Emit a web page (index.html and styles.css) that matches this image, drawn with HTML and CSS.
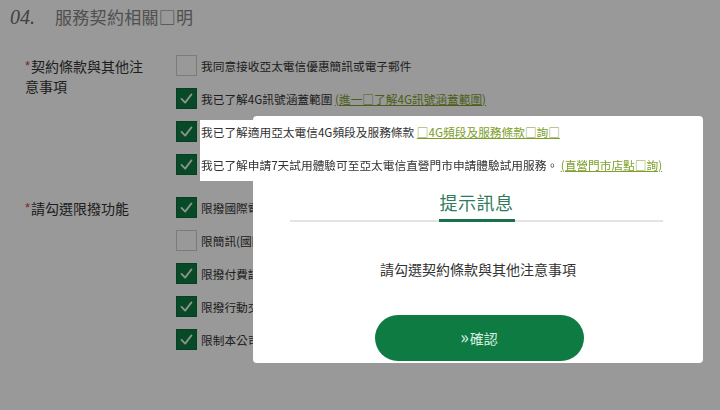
FILE: index.html
```html
<!DOCTYPE html>
<html lang="zh-Hant">
<head>
<meta charset="utf-8">
<title>服務契約相關說明</title>
<link rel="stylesheet" href="styles.css">
</head>
<body>
<div class="page">
  <h2 class="sec-title"><span class="num">04.</span><span class="title-text">服務契約相關□明</span></h2>

  <div class="form-row first">
    <div class="label"><span class="req">*</span>契約條款與其他注意事項</div>
    <ul class="opts">
      <li class="opt"><span class="cb"></span><span class="txt">我同意接收亞太電信優惠簡訊或電子郵件</span></li>
      <li class="opt"><span class="cb on"><svg viewBox="0 0 21 21"><polyline points="5,11 9,15 16,6"/></svg></span><span class="txt">我已了解4G訊號涵蓋範圍 <a class="lnk">(進一□了解4G訊號涵蓋範圍)</a></span></li>
      <li class="opt"><span class="cb on"><svg viewBox="0 0 21 21"><polyline points="5,11 9,15 16,6"/></svg></span><span class="txt lifted top">我已了解適用亞太電信4G頻段及服務條款 <a class="lnk">□4G頻段及服務條款□詢□</a></span></li>
      <li class="opt"><span class="cb on"><svg viewBox="0 0 21 21"><polyline points="5,11 9,15 16,6"/></svg></span><span class="txt lifted">我已了解申請7天試用體驗可至亞太電信直營門市申請體驗試用服務。 <a class="lnk">(直營門市店點□詢)</a></span></li>
    </ul>
  </div>

  <div class="form-row second">
    <div class="label"><span class="req">*</span>請勾選限撥功能</div>
    <ul class="opts">
      <li class="opt"><span class="cb on"><svg viewBox="0 0 21 21"><polyline points="5,11 9,15 16,6"/></svg></span><span class="txt">限撥國際電話</span></li>
      <li class="opt"><span class="cb"></span><span class="txt">限簡訊(國際簡訊)</span></li>
      <li class="opt"><span class="cb on"><svg viewBox="0 0 21 21"><polyline points="5,11 9,15 16,6"/></svg></span><span class="txt">限撥付費語音資訊</span></li>
      <li class="opt"><span class="cb on"><svg viewBox="0 0 21 21"><polyline points="5,11 9,15 16,6"/></svg></span><span class="txt">限撥行動交友</span></li>
      <li class="opt"><span class="cb on"><svg viewBox="0 0 21 21"><polyline points="5,11 9,15 16,6"/></svg></span><span class="txt">限制本公司小額付費</span></li>
    </ul>
  </div>
</div>

<div class="overlay"></div>

<div class="modal">
  <div class="tabs"><div class="tab">提示訊息</div></div>
  <p class="msg">請勾選契約條款與其他注意事項</p>
  <button class="btn"><span class="arr">»</span>確認</button>
</div>
</body>
</html>
```

FILE: styles.css
```css
html, body {
  margin: 0;
  padding: 0;
  background: #ffffff;
}

body {
  font-family: "Noto Sans CJK TC", "Noto Sans", sans-serif;
  color: #333;
  width: 720px;
  height: 410px;
  overflow: hidden;
}

.page {
  padding-top: 5px;
}

.sec-title {
  margin: 0;
  padding-left: 10px;
  height: 24px;
  line-height: 24px;
  font-weight: normal;
  display: flex;
  align-items: center;
}

.num {
  font-family: "Liberation Serif", serif;
  font-style: italic;
  font-size: 20px;
  color: #6e6e6e;
  width: 45px;
}

.title-text {
  font-size: 17px;
  color: #858585;
  letter-spacing: 0.3px;
}

.form-row {
  display: flex;
  align-items: flex-start;
}

.form-row.first {
  margin-top: 20px;
}

.form-row.second {
  margin-top: 10px;
}

.label {
  width: 126px;
  margin-left: 25px;
  margin-right: 25px;
  padding-top: 7px;
  font-size: 14px;
  line-height: 20px;
  color: #333;
}

.req {
  font-family: "Liberation Sans", sans-serif;
  color: #d23a3a;
  font-size: 13px;
  vertical-align: 2px;
  margin-right: 1px;
}

.opts {
  list-style: none;
  margin: 0;
  padding: 0;
  display: flex;
  flex-direction: column;
}

.opt {
  display: flex;
  align-items: center;
  height: 33px;
}

.cb {
  width: 19px;
  height: 19px;
  border: 1px solid #cfcfcf;
  background: #fff;
  margin-right: 3px;
  display: flex;
  flex-shrink: 0;
}

.cb.on {
  background: #0e7c44;
  border-color: #0b6a39;
}

.cb svg {
  width: 19px;
  height: 19px;
}

.cb svg polyline {
  fill: none;
  stroke: #e9f5ee;
  stroke-width: 2;
  stroke-linecap: round;
  stroke-linejoin: round;
}

.txt {
  font-size: 11.7px;
  line-height: 33px;
  height: 33px;
  padding-left: 1px;
  white-space: nowrap;
  color: #333;
}

.txt.lifted {
  position: relative;
  z-index: 4;
  background: #ffffff;
}

.txt.lifted.top {
  background: linear-gradient(#ffffff, #ffffff) no-repeat 0 5px / 100% 100%;
}

.lnk {
  color: #7d9e2c;
  text-decoration: underline;
}

.overlay {
  position: fixed;
  inset: 0;
  background: rgba(0, 0, 0, 0.4);
  z-index: 1;
}

.modal {
  position: absolute;
  left: 253px;
  top: 116px;
  width: 450px;
  height: 247px;
  background: #ffffff;
  border-radius: 4px;
  z-index: 3;
  display: flex;
  flex-direction: column;
  align-items: center;
}

.tabs {
  margin-top: 74px;
  margin-left: 37px;
  margin-right: 40px;
  align-self: stretch;
  display: flex;
  justify-content: center;
  border-bottom: 2px solid #e4e4e4;
}

.tab {
  font-size: 18px;
  line-height: 24px;
  color: #2f7b5c;
  padding: 0 1px 5px;
  border-bottom: 3px solid #17714a;
  margin-bottom: -2px;
  letter-spacing: 0.5px;
}

.msg {
  margin: 37px 0 0;
  font-size: 14px;
  line-height: 20px;
  color: #333;
}

.btn {
  margin-top: 36px;
  margin-left: 2px;
  width: 209px;
  height: 46px;
  border: none;
  border-radius: 23px;
  background: #0e7b43;
  color: #d8efe1;
  font-family: "Noto Sans CJK TC", sans-serif;
  font-size: 14px;
  padding: 0;
}

.arr {
  font-size: 18px;
  line-height: 14px;
  margin-right: 1px;
}
```
